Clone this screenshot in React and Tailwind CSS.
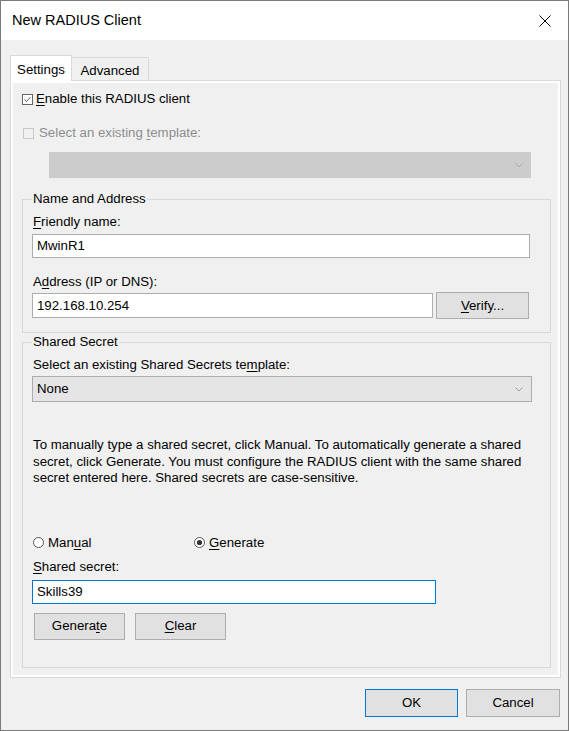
import React from "react";

const U = ({ children }) => (
  <span className="underline decoration-1 underline-offset-[2px]">{children}</span>
);

function CheckBox({ checked, disabled }) {
  return (
    <svg width="11" height="11" viewBox="0 0 11 11" className="shrink-0">
      <rect
        x="0.5"
        y="0.5"
        width="10"
        height="10"
        fill={disabled ? "#f0f0f0" : "#ffffff"}
        stroke={disabled ? "#c8c8c8" : "#666"}
      />
      {checked && (
        <path d="M2.5 5.5 L4.5 7.5 L8.5 3.2" fill="none" stroke="#555" strokeWidth="1" />
      )}
    </svg>
  );
}

function Radio({ checked }) {
  return (
    <svg width="11" height="11" viewBox="0 0 11 11" className="shrink-0">
      <circle cx="5.5" cy="5.5" r="5" fill="#fff" stroke="#555" />
      {checked && <circle cx="5.5" cy="5.5" r="2.6" fill="#333" />}
    </svg>
  );
}

function Chevron({ color }) {
  return (
    <svg width="8" height="5" viewBox="0 0 8 5">
      <path d="M0.5 0.5 L4 4 L7.5 0.5" fill="none" stroke={color} strokeWidth="1" />
    </svg>
  );
}

function Button({ children, className = "", primary }) {
  return (
    <div
      className={
        "flex items-center justify-center bg-[#e1e1e1] border " +
        (primary ? "border-[#0078d7] " : "border-[#adadad] ") +
        className
      }
    >
      {children}
    </div>
  );
}

export default function App() {
  return (
    <div
      className="w-[569px] h-[731px] border border-[#7a7a7a] bg-[#f0f0f0] flex flex-col text-[13.25px] text-black"
      style={{ fontFamily: '"Liberation Sans", Arial, sans-serif' }}
    >
      {/* Title bar */}
      <div className="h-[39px] bg-white flex items-center justify-between pl-[11px] pr-[17px]">
        <span className="text-[14.5px]">New RADIUS Client</span>
        <svg width="12" height="12" viewBox="0 0 12 12">
          <path d="M0.5 0.5 L11.5 11.5 M11.5 0.5 L0.5 11.5" stroke="#000" strokeWidth="1" />
        </svg>
      </div>

      {/* Tabs */}
      <div className="mt-[15px] ml-[9px] h-[25px] flex items-end">
        <div className="relative z-10 h-[26px] w-[62px] -mb-px bg-white border border-b-0 border-[#d9d9d9] flex items-start justify-center pt-[4px]">
          Settings
        </div>
        <div className="h-[23px] w-[78px] -ml-px border border-b-0 border-[#d9d9d9] bg-[#f0f0f0] flex items-center justify-center pt-[3px]">
          Advanced
        </div>
      </div>

      {/* Tab page */}
      <div className="ml-[9px] w-[551px] h-[598px] border border-[#d9d9d9]">
        <div className="h-full border-2 border-white bg-[#f0f0f0] flex flex-col">
          <div className="mt-[8px] ml-[9px] h-4 flex items-center gap-[3px]">
            <CheckBox checked />
            <span>
              <U>E</U>nable this RADIUS client
            </span>
          </div>

          <div className="mt-[18px] ml-[10px] h-4 flex items-center gap-[5px] text-[#8d8d8d]">
            <CheckBox disabled />
            <span>
              Select an existing <U>t</U>emplate:
            </span>
          </div>

          <div className="mt-[11px] ml-[36px] w-[482px] h-[26px] bg-[#cccccc] flex items-center justify-end pr-[8px]">
            <Chevron color="#a8a8a8" />
          </div>

          {/* Name and Address */}
          <fieldset className="mt-[13px] ml-[9px] w-[529px] h-[142px] border border-[#d8d8d8] pl-[9px]">
            <legend className="px-[1px] h-4 leading-4">Name and Address</legend>
            <div className="mt-[7px] h-4 leading-4 pl-[1px]">
              <U>F</U>riendly name:
            </div>
            <div className="mt-[4px] h-[24px] w-[498px] border border-[#adadad] bg-white flex items-center pl-[4px]">
              MwinR1
            </div>
            <div className="mt-[16px] h-4 leading-4 pl-[1px]">
              A<U>d</U>dress (IP or DNS):
            </div>
            <div className="mt-[2px] flex items-start gap-[3px]">
              <div className="mt-px h-[25px] w-[401px] border border-[#adadad] bg-white flex items-center pl-[4px]">
                192.168.10.254
              </div>
              <Button className="w-[93px] h-[27px]">
                <span>
                  <U>V</U>erify...
                </span>
              </Button>
            </div>
          </fieldset>

          {/* Shared Secret */}
          <fieldset className="mt-[1px] ml-[9px] w-[529px] h-[334px] border border-[#d8d8d8] pl-[9px]">
            <legend className="px-[1px] h-4 leading-4">Shared Secret</legend>
            <div className="mt-[7px] h-4 leading-4 pl-[1px]">
              Select an existing Shared Secrets te<U>m</U>plate:
            </div>
            <div className="mt-[3px] h-[26px] w-[500px] bg-[#e5e5e5] border border-[#acacac] flex items-center justify-between pl-[4px] pr-[8px]">
              <span>None</span>
              <Chevron color="#a0a0a0" />
            </div>
            <p className="mt-[35px] pl-[1px] leading-[16.5px]">
              To manually type a shared secret, click Manual. To automatically generate a shared
              <br />
              secret, click Generate. You must configure the RADIUS client with the same shared
              <br />
              secret entered here. Shared secrets are case-sensitive.
            </p>
            <div className="mt-[48px] h-4 flex items-center pl-[1px]">
              <div className="w-[161px] flex items-center gap-[4px]">
                <Radio />
                <span>
                  Man<U>u</U>al
                </span>
              </div>
              <div className="flex items-center gap-[4px]">
                <Radio checked />
                <span>
                  <U>G</U>enerate
                </span>
              </div>
            </div>
            <div className="mt-[8px] h-4 leading-4 pl-[1px]">
              <U>S</U>hared secret:
            </div>
            <div className="mt-[5px] h-[24px] w-[404px] border border-[#0078d7] bg-white flex items-center pl-[4px]">
              Skills39
            </div>
            <div className="mt-[9px] flex gap-[10px] pl-[2px]">
              <Button className="w-[91px] h-[27px]">
                <span>
                  Genera<U>t</U>e
                </span>
              </Button>
              <Button className="w-[91px] h-[27px]">
                <span>
                  <U>C</U>lear
                </span>
              </Button>
            </div>
          </fieldset>
        </div>
      </div>

      {/* Footer */}
      <div className="mt-[11px] flex justify-end gap-[8px] pr-[8px]">
        <Button primary className="w-[93px] h-[28px]">
          OK
        </Button>
        <Button className="w-[94px] h-[28px]">Cancel</Button>
      </div>
    </div>
  );
}
